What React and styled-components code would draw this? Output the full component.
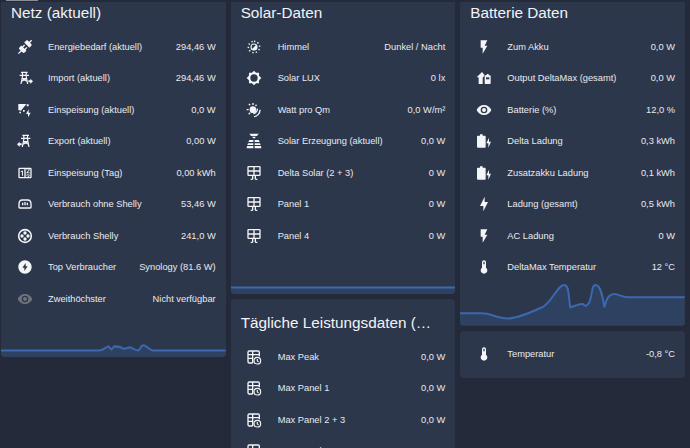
import styled, { createGlobalStyle } from "styled-components";

const GlobalStyle = createGlobalStyle`
  html, body {
    margin: 0;
    height: 448px;
    overflow: hidden;
    background: #252a3b;
  }
  body {
    font-family: "Liberation Sans", Arial, sans-serif;
    color: #e8eaee;
  }
`;

const TopEdge = styled.div`
  position: absolute;
  top: 0;
  left: 0;
  right: 0;
  height: 2px;
  background: #252a3b;
  z-index: 1;

  &::before {
    content: "";
    position: absolute;
    left: 6px;
    top: 0;
    width: 32px;
    height: 1px;
    background: #8b8f99;
  }
`;

const Dashboard = styled.div`
  display: grid;
  grid-template-columns: repeat(3, 1fr);
  gap: 5px;
  align-items: start;
  margin-top: -11px;
  padding: 0 5px 0 1px;
`;

const Column = styled.div`
  display: flex;
  flex-direction: column;
  gap: 5px;
  min-width: 0;
`;

const Card = styled.section`
  background: #2d374c;
  border-radius: 4px;
  overflow: hidden;
  padding-top: ${(p) => (p.$plain ? "8px" : "0")};
  padding-bottom: ${(p) => (p.$plain ? "8px" : "0")};
`;

const Title = styled.h2`
  margin: 0;
  height: 42px;
  padding: 14px 10px 0;
  box-sizing: border-box;
  font-size: 15.3px;
  line-height: 20px;
  font-weight: 400;
  color: #f2f3f5;
  white-space: nowrap;
`;

const Rows = styled.div`
  display: flex;
  flex-direction: column;
`;

const Row = styled.div`
  display: flex;
  align-items: center;
  height: 31.5px;
  padding: 0 10px 0 15.5px;
  font-size: 9.3px;
`;

const IconBox = styled.span`
  width: 16px;
  height: 16px;
  margin-right: 15.5px;
  flex: none;
  color: ${(p) => (p.$muted ? "#6f747c" : "#f4f5f7")};

  svg {
    display: block;
    width: 100%;
    height: 100%;
  }
`;

const Label = styled.span`
  flex: 1;
  white-space: nowrap;
`;

const Value = styled.span`
  white-space: nowrap;
`;

const Chart = styled.svg`
  display: block;
  width: 100%;
  height: 42.5px;
`;

const Fill = (props) => <path fill="currentColor" {...props} />;
const Line = (props) => (
  <path fill="none" stroke="currentColor" strokeWidth="2" {...props} />
);

const Tower = ({ flip }) => (
  <g transform={flip ? "translate(24 0) scale(-1 1)" : undefined}>
    <Line
      strokeWidth="1.8"
      d="M6 3.500h10M4 8h14M8 3.500 8.500 8 6 21M14 3.500 13.500 8 16 21M8 13h6M7 17l7-4M15 17 8 13"
    />
    <Fill d="M17 15.500h3V13l4 4-4 4v-2.500h-3z" />
  </g>
);

const SolarPanel = () => (
  <Line d="M4 2.500h16a1 1 0 0 1 1 1v11a1 1 0 0 1-1 1H4a1 1 0 0 1-1-1v-11a1 1 0 0 1 1-1zM3 9h18M12 2.500v13M10 15.500v6M14 15.500v6M7 21.500h3M14 21.500h3" />
);

const TableClock = () => (
  <>
    <Line d="M10 21H5a2 2 0 0 1-2-2V5a2 2 0 0 1 2-2h13a2 2 0 0 1 2 2v6M3 8.500h17M3 14h8M10 3.500V21" />
    <Line strokeWidth="1.700" d="M17 12.500a5 5 0 1 1 0 10 5 5 0 0 1 0-10zM17 15v3l2 1.300" />
  </>
);

const BatteryBolt = () => (
  <>
    <Fill d="M6 2h4v2h3a1.500 1.500 0 0 1 1.500 1.500v15A1.500 1.500 0 0 1 13 22H3a1.500 1.500 0 0 1-1.500-1.500v-15A1.500 1.500 0 0 1 3 4h3z" />
    <Fill d="M19.500 7v6h3l-4 9v-6.500h-3z" />
  </>
);

const Flash = () => <Fill d="M7 2v11h3v9l7-12h-4l4-8z" />;
const Bolt = () => <Fill d="M11 15H6l7-14v8h5l-7 14z" />;
const Thermometer = () => (
  <Fill d="M15 13V5a3 3 0 0 0-6 0v8a5 5 0 1 0 6 0zM12 4a1 1 0 0 1 1 1v3h-2V5a1 1 0 0 1 1-1z" />
);
const Eye = () => (
  <Fill d="M12 9a3 3 0 1 0 0 6 3 3 0 0 0 0-6zm0 8a5 5 0 1 1 0-10 5 5 0 0 1 0 10zm0-12.500C7 4.500 2.730 7.610 1 12c1.730 4.390 6 7.500 11 7.500s9.270-3.110 11-7.500c-1.730-4.390-6-7.500-11-7.500z" />
);

const icons = {
  connection: (
    <Fill d="M21.400 7.500c.8.8.8 2.100 0 2.800l-2.800 2.800-7.800-7.800 2.800-2.800c.8-.8 2.100-.8 2.800 0l1.800 1.800 3-3 1.400 1.400-3 3zM15.600 13.300l-1.400-1.400-2.800 2.800-2.100-2.100 2.800-2.800-1.400-1.400-2.800 2.800-1.500-1.400-2.800 2.800c-.8.8-.8 2.100 0 2.800l1.800 1.800-4 4 1.400 1.400 4-4 1.800 1.800c.8.8 2.100.8 2.800 0l2.800-2.800-1.400-1.400z" />
  ),
  towerImport: <Tower />,
  towerExport: <Tower flip />,
  feedIn: (
    <>
      <Fill d="M2 3h12L6 13l-4-1z" />
      <Fill d="M14.500 3.500h3v3h-3zM9 12h2.500v2.500H9zM3.500 14.500H6V17H3.500z" />
      <Fill d="M17.500 11v5h3l-4 7v-5h-3z" />
    </>
  ),
  counter: (
    <Fill d="M4,4H20A2,2 0 0,1 22,6V18A2,2 0 0,1 20,20H4A2,2 0 0,1 2,18V6A2,2 0 0,1 4,4M4,6V18H11V6H4M20,18V6H18.76C19,6.54 18.95,7.07 18.95,7.13C18.88,7.8 18.41,8.5 18.24,8.75L15.91,11.3L19.23,11.28L19.24,12.5L14.04,12.47L14,11.47C14,11.47 17.05,8.24 17.2,7.95C17.34,7.67 17.91,6 16.5,6C15.27,6.05 15.41,7.3 15.41,7.3L13.87,7.31C13.87,7.31 13.88,6.65 14.25,6H13V18H15.58L15.57,17.14L16.54,17.13C16.54,17.13 17.45,16.97 17.46,16.08C17.5,15.08 16.65,15.08 16.5,15.08C16.37,15.08 15.43,15.13 15.43,15.95H13.91C13.91,15.95 13.95,13.89 16.5,13.89C19.1,13.89 18.96,15.91 18.96,15.91C18.96,15.91 19,17.16 17.85,17.63L18.37,18H20M8.92,16H7.42V10.2L5.62,10.76V9.53L8.76,8.41H8.92V16Z" />
  ),
  socket: (
    <>
      <Line d="M8 6h8c3.500 0 5 3 5 6v5a1 1 0 0 1-1 1H4a1 1 0 0 1-1-1v-5c0-3 1.500-6 5-6z" />
      <Fill d="M7.500 10H9.500v4h-2zM11 9h2v5h-2zM14.500 10h2v4h-2z" />
    </>
  ),
  shelly: (
    <>
      <Line strokeWidth="2.400" d="M12 2.500a9.500 9.500 0 1 1 0 19 9.500 9.500 0 0 1 0-19z" />
      <Fill d="M12 5a2.500 2.500 0 1 1 0 5 2.500 2.500 0 0 1 0-5zM12 14a2.500 2.500 0 1 1 0 5 2.500 2.500 0 0 1 0-5zM7.500 9.500a2.500 2.500 0 1 1 0 5 2.500 2.500 0 0 1 0-5zM16.500 9.500a2.500 2.500 0 1 1 0 5 2.500 2.500 0 0 1 0-5z" />
    </>
  ),
  flashCircle: (
    <Fill d="M12 2C6.500 2 2 6.500 2 12s4.500 10 10 10 10-4.500 10-10S17.500 2 12 2zm-1 16v-5H8l5-7v5h3l-5 7z" />
  ),
  eye: <Eye />,
  sky: (
    <>
      <Line strokeDasharray="2 3.340" strokeWidth="2.200" d="M12 3.500a8.500 8.500 0 1 1 0 17 8.500 8.500 0 0 1 0-17z" />
      <Line strokeWidth="1.600" d="M12 7.500a4.500 4.500 0 1 1 0 9 4.500 4.500 0 0 1 0-9z" />
      <Fill d="M15.200 8.800a4.500 4.500 0 0 1-6.400 6.400z" />
    </>
  ),
  lux: (
    <Fill fillRule="evenodd" d="M12 1l3.100 3.300 4.400-.1.100 4.400L23 12l-3.400 3.400-.1 4.400-4.400-.1L12 23l-3.100-3.300-4.400.1-.1-4.400L1 12l3.400-3.400.1-4.400 4.400.1zM12 6.500a5.500 5.500 0 1 0 0 11 5.500 5.500 0 0 0 0-11z" />
  ),
  wattQm: (
    <>
      <Fill d="M10.500 6.500a5 5 0 1 1 0 10 5 5 0 0 1 0-10z" />
      <Fill d="M9.500 1.500h2v3h-2zM1 10.500h3v2H1zM3.500 3.500 5 2.200l2 2-1.400 1.500zM3.400 17.500l2.100-2.100 1.400 1.400L4.800 19zM15 3.500l1.500 1.400-1.600 1.700-1.400-1.400z" />
      <Line d="M17 10c.5 3.500-2.500 7-6 7.500M21 11.500c.2 5.500-4 10-9 10.500" />
    </>
  ),
  solarPower: (
    <>
      <Fill d="M5 1h14l-2.500 3.500h-9zM9.500 5.500h5L13.500 8h-3z" />
      <Fill d="M5 10.500h6v3H3.500zM13 10.500h6l1.500 3H13zM3 15.500h8V18H2zM13 15.500h8l1 2.500h-9zM1.500 19.500H11V23H1zM13 19.500h9.500L23 23H13z" />
    </>
  ),
  solarPanel: <SolarPanel />,
  flash: <Flash />,
  homeBattery: (
    <>
      <Fill d="M9 3 1 11h3v10h6V11.500L13 8z" />
      <Fill d="M16 6h3v2h2a1 1 0 0 1 1 1v11a1 1 0 0 1-1 1h-7a1 1 0 0 1-1-1V9a1 1 0 0 1 1-1h2z" />
      <path fill="#2d374c" d="M15 11h5v3h-5z" />
    </>
  ),
  batteryBolt: <BatteryBolt />,
  bolt: <Bolt />,
  thermometer: <Thermometer />,
  tableClock: <TableClock />,
};

const Icon = ({ name, muted }) => (
  <IconBox $muted={muted}>
    <svg viewBox="0 0 24 24">{icons[name]}</svg>
  </IconBox>
);

const DataRow = ({ icon, label, value, muted }) => (
  <Row>
    <Icon name={icon} muted={muted} />
    <Label>{label}</Label>
    <Value>{value}</Value>
  </Row>
);

// chart points are in card pixels, 224 wide and 42 high
const LineChart = ({ line }) => (
  <Chart viewBox="0 0 224 42" preserveAspectRatio="none">
    <path d={`${line}V42H0Z`} fill="#2f4160" />
    <path d={line} fill="none" stroke="#3b68ae" strokeWidth="2" />
  </Chart>
);

const netLine =
  "M0 35H98C102 35 104 32 107 31L110 34L113 31C116 31 119 31 121 33C124 34 126 32 129 32C132 33 134 35 137 35C139 34 139 30 142 30C145 30 147 34 151 35H224";
const solarLine = "M0 35H224";
const batteryLine =
  "M0 30H22C30 30 38 35 48 35C58 35 72 28 82 24C92 19 97 2 104 2C109 2 108 14 110 24C114 23 120 20 123 21C125 24 127 22 129 19C132 12 131 2 135 2C140 2 142 12 144 24C146 14 150 10 155 11C160 12 162 14 167 14H224";

const netRows = [
  ["connection", "Energiebedarf (aktuell)", "294,46 W"],
  ["towerImport", "Import (aktuell)", "294,46 W"],
  ["feedIn", "Einspeisung (aktuell)", "0,0 W"],
  ["towerExport", "Export (aktuell)", "0,00 W"],
  ["counter", "Einspeisung (Tag)", "0,00 kWh"],
  ["socket", "Verbrauch ohne Shelly", "53,46 W"],
  ["shelly", "Verbrauch Shelly", "241,0 W"],
  ["flashCircle", "Top Verbraucher", "Synology (81.6 W)"],
  ["eye", "Zweithöchster", "Nicht verfügbar", true],
];

const solarRows = [
  ["sky", "Himmel", "Dunkel / Nacht"],
  ["lux", "Solar LUX", "0 lx"],
  ["wattQm", "Watt pro Qm", "0,0 W/m²"],
  ["solarPower", "Solar Erzeugung (aktuell)", "0,0 W"],
  ["solarPanel", "Delta Solar (2 + 3)", "0 W"],
  ["solarPanel", "Panel 1", "0 W"],
  ["solarPanel", "Panel 4", "0 W"],
];

const dailyRows = [
  ["tableClock", "Max Peak", "0,0 W"],
  ["tableClock", "Max Panel 1", "0,0 W"],
  ["tableClock", "Max Panel 2 + 3", "0,0 W"],
  ["tableClock", "Max Panel 4", "0,0 W"],
];

const batteryRows = [
  ["flash", "Zum Akku", "0,0 W"],
  ["homeBattery", "Output DeltaMax (gesamt)", "0,0 W"],
  ["eye", "Batterie (%)", "12,0 %"],
  ["batteryBolt", "Delta Ladung", "0,3 kWh"],
  ["batteryBolt", "Zusatzakku Ladung", "0,1 kWh"],
  ["bolt", "Ladung (gesamt)", "0,5 kWh"],
  ["flash", "AC Ladung", "0 W"],
  ["thermometer", "DeltaMax Temperatur", "12 °C"],
];

const renderRows = (rows) => (
  <Rows>
    {rows.map(([icon, label, value, muted]) => (
      <DataRow key={label} icon={icon} label={label} value={value} muted={muted} />
    ))}
  </Rows>
);

export default function App() {
  return (
    <>
      <GlobalStyle />
      <TopEdge />
      <Dashboard>
        <Column>
          <Card>
            <Title>Netz (aktuell)</Title>
            {renderRows(netRows)}
            <LineChart line={netLine} />
          </Card>
        </Column>
        <Column>
          <Card>
            <Title>Solar-Daten</Title>
            {renderRows(solarRows)}
            <LineChart line={solarLine} />
          </Card>
          <Card>
            <Title>Tägliche Leistungsdaten (…</Title>
            {renderRows(dailyRows)}
          </Card>
        </Column>
        <Column>
          <Card>
            <Title>Batterie Daten</Title>
            {renderRows(batteryRows)}
            <LineChart line={batteryLine} />
          </Card>
          <Card $plain>
            {renderRows([["thermometer", "Temperatur", "-0,8 °C"]])}
          </Card>
        </Column>
      </Dashboard>
    </>
  );
}
